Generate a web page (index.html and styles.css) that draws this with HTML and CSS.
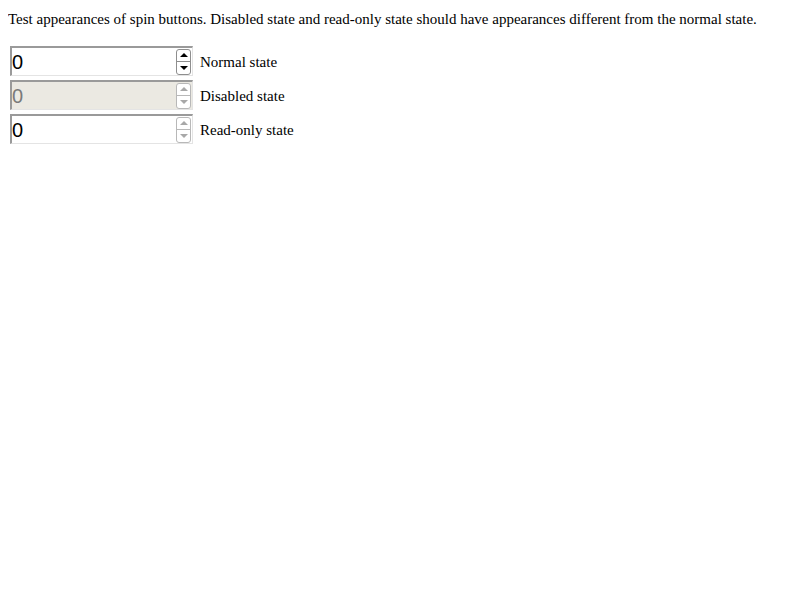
FILE: index.html
```html
<!DOCTYPE html>
<html>
<head>
<meta charset="utf-8">
<link rel="stylesheet" href="styles.css">
</head>
<body>
<p class="intro">Test appearances of spin buttons. Disabled state and read-only state should have appearances different from the normal state.</p>
<div class="rows">
  <div class="row">
    <div class="spin">
      <span class="value">0</span>
      <span class="buttons">
        <span class="btn up"></span>
        <span class="btn down"></span>
      </span>
    </div>
    <span class="label">Normal state</span>
  </div>
  <div class="row">
    <div class="spin disabled">
      <span class="value">0</span>
      <span class="buttons">
        <span class="btn up"></span>
        <span class="btn down"></span>
      </span>
    </div>
    <span class="label">Disabled state</span>
  </div>
  <div class="row">
    <div class="spin readonly">
      <span class="value">0</span>
      <span class="buttons">
        <span class="btn up"></span>
        <span class="btn down"></span>
      </span>
    </div>
    <span class="label">Read-only state</span>
  </div>
</div>
</body>
</html>
```

FILE: styles.css
```css
html, body {
  background: #ffffff;
}
body {
  margin: 8px;
  font-family: "Liberation Serif", "Times New Roman", serif;
  font-size: 15px;
  color: #000;
}
.intro {
  margin: 2px 0 0 0;
  line-height: 18px;
}
.rows {
  display: flex;
  flex-direction: column;
  gap: 4px;
  margin-top: 18px;
  margin-left: 2px;
}
.row {
  display: flex;
  align-items: center;
  gap: 7px;
}
.spin {
  box-sizing: border-box;
  width: 183px;
  height: 30px;
  border-top: 2px solid #9a9a9a;
  border-left: 2px solid #9a9a9a;
  border-right: 1px solid #e4e4e4;
  border-bottom: 1px solid #e4e4e4;
  background: #fff;
  display: flex;
  align-items: center;
  justify-content: space-between;
  padding: 0 1px 0 0;
}
.spin.disabled {
  background: #ebe9e2;
}
.value {
  font-family: "Liberation Sans", Arial, sans-serif;
  font-size: 20px;
  line-height: 24px;
  color: #000;
  padding-top: 1px;
}
.disabled .value {
  color: #7a7a7a;
}
.buttons {
  box-sizing: border-box;
  width: 15px;
  height: 26px;
  border: 1px solid #8e8e8e;
  border-radius: 3px;
  display: flex;
  flex-direction: column;
  background: #fff;
}
.disabled .buttons, .readonly .buttons {
  border-color: #b8b8b8;
}
.btn {
  flex: 1;
  display: flex;
  align-items: center;
  justify-content: center;
}
.btn.up {
  border-bottom: 1px solid #8e8e8e;
}
.disabled .btn.up, .readonly .btn.up {
  border-bottom-color: #b8b8b8;
}
.btn::before {
  content: "";
  width: 0;
  height: 0;
  border-left: 4px solid transparent;
  border-right: 4px solid transparent;
}
.btn.up::before {
  border-bottom: 4px solid #000;
}
.btn.down::before {
  border-top: 4px solid #000;
}
.disabled .btn.up::before, .readonly .btn.up::before {
  border-bottom-color: #a8a8a8;
}
.disabled .btn.down::before, .readonly .btn.down::before {
  border-top-color: #a8a8a8;
}
.label {
  line-height: 18px;
  padding-top: 2px;
}
```
